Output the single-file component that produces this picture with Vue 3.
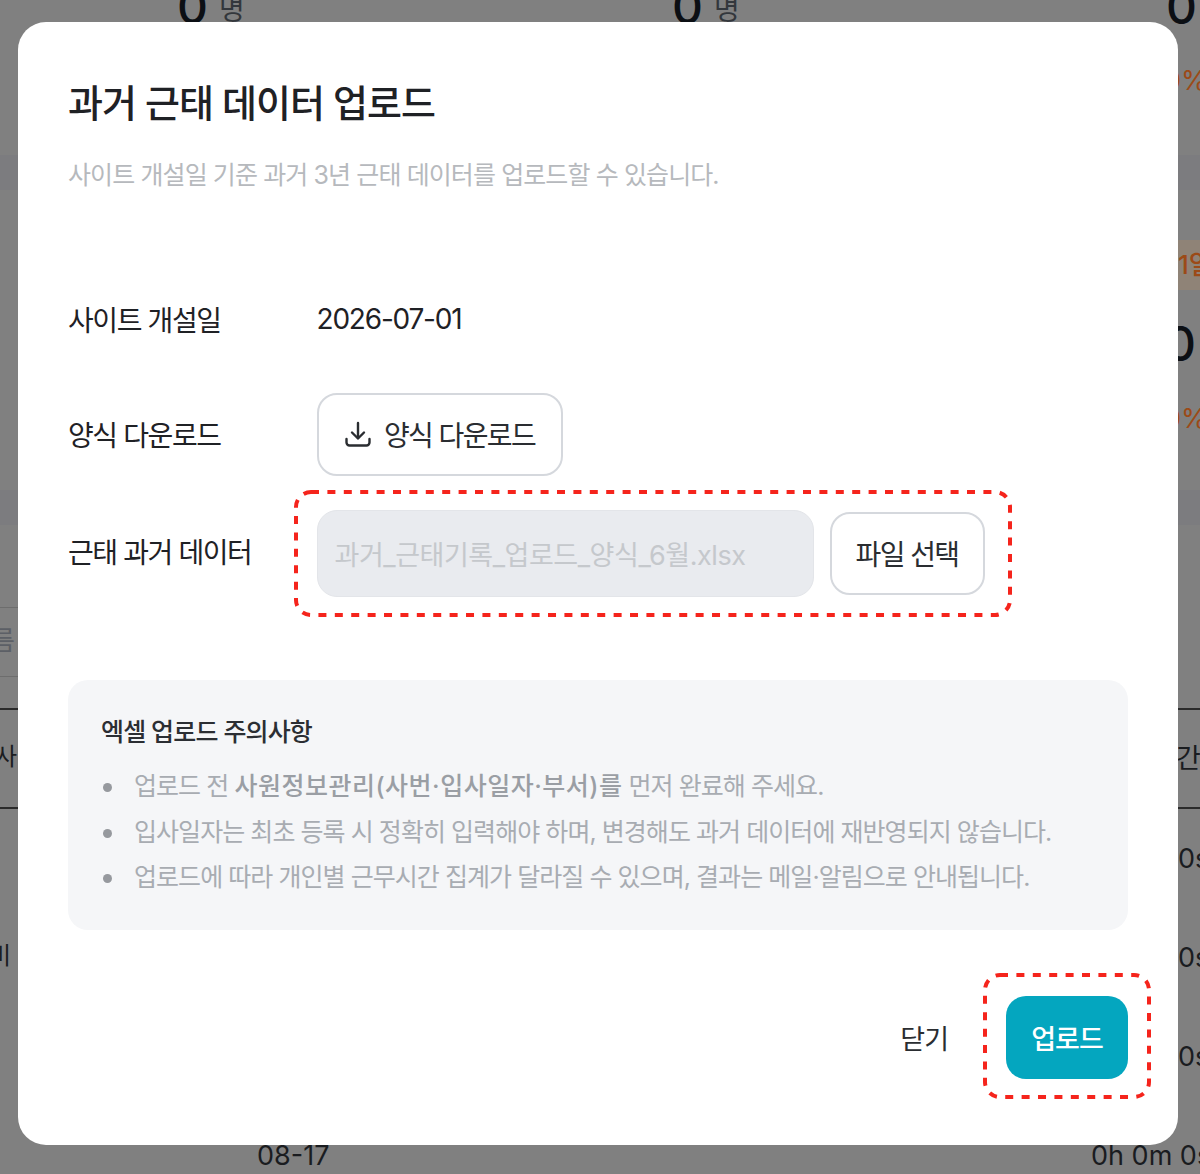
<script setup>
const rows = [
  { id: 1, lead: '업로드 전 ', strong: '사원정보관리(사번·입사일자·부서)를', tail: ' 먼저 완료해 주세요.' },
  { id: 2, lead: '입사일자는 최초 등록 시 정확히 입력해야 하며, 변경해도 과거 데이터에 재반영되지 않습니다.', strong: '', tail: '' },
  { id: 3, lead: '업로드에 따라 개인별 근무시간 집계가 달라질 수 있으며, 결과는 메일·알림으로 안내됩니다.', strong: '', tail: '' }
]
</script>

<template>
  <div class="page">
    <div class="backdrop">
      <span class="bg band s1"></span>
      <span class="bg band s2"></span>
      <span class="bg band s3"></span>
      <span class="bg band s4"></span>
      <span class="bg big b1">0</span><span class="bg unit u1">명</span>
      <span class="bg big b2">0</span><span class="bg unit u2">명</span>
      <span class="bg big b3">0</span>
      <span class="bg pct p1">0%</span>
      <span class="bg tag">1일</span>
      <span class="bg big b4">0</span>
      <span class="bg pct p2">0%</span>
      <span class="bg field"></span>
      <span class="bg field-text">름</span>
      <span class="bg rule r1"></span>
      <span class="bg rule r2"></span>
      <span class="bg cell c1">사</span>
      <span class="bg cell c2">비</span>
      <span class="bg cell c3">간</span>
      <span class="bg cell t1">0s</span>
      <span class="bg cell t2">0s</span>
      <span class="bg cell t3">0s</span>
      <span class="bg cell d1">08-17</span>
      <span class="bg cell d2">0h 0m 0s</span>
    </div>

    <section class="modal">
      <h1 class="title">과거 근태 데이터 업로드</h1>
      <p class="subtitle">사이트 개설일 기준 과거 3년 근태 데이터를 업로드할 수 있습니다.</p>

      <div class="form">
        <div class="row row-date">
          <span class="label">사이트 개설일</span>
          <span class="value">2026-07-01</span>
        </div>
        <div class="row row-download">
          <span class="label">양식 다운로드</span>
          <button class="btn download" type="button">
            <svg class="icon" viewBox="0 0 28 28" fill="none" stroke="currentColor" stroke-width="2.4" stroke-linecap="round" stroke-linejoin="round">
              <path d="M14 3v15" />
              <path d="M8 12.5l6 6 6-6" />
              <path d="M2.5 19v3.5a3 3 0 0 0 3 3h17a3 3 0 0 0 3-3V19" />
            </svg>
            <span>양식 다운로드</span>
          </button>
        </div>
        <div class="row row-file">
          <span class="label label-file">근태 과거 데이터</span>
          <div class="file-group">
            <div class="file-input">과거_근태기록_업로드_양식_6월.xlsx</div>
            <button class="btn pick" type="button">파일 선택</button>
            <svg class="mark mark-file" viewBox="0 0 718 127" fill="none">
              <rect x="2" y="2" width="714" height="123" rx="15" />
            </svg>
          </div>
        </div>
      </div>

      <div class="notice">
        <h2 class="notice-title">엑셀 업로드 주의사항</h2>
        <ul class="notice-list">
          <li v-for="r in rows" :key="r.id">{{ r.lead }}<b v-if="r.strong">{{ r.strong }}</b>{{ r.tail }}</li>
        </ul>
      </div>

      <div class="actions">
        <button class="close" type="button">닫기</button>
        <div class="upload-wrap">
          <button class="upload" type="button">업로드</button>
          <svg class="mark mark-upload" viewBox="0 0 168 126" fill="none">
            <rect x="2" y="2" width="164" height="122" rx="15" />
          </svg>
        </div>
      </div>
    </section>
  </div>
</template>

<style>
html, body { margin: 0; background: #808080; }
</style>

<style scoped>
.page {
  position: relative;
  width: 1200px;
  height: 1174px;
  overflow: hidden;
  background: #808080;
  font-family: "Inter", "Noto Sans CJK KR", sans-serif;
  color: #1f2125;
}
.backdrop { position: absolute; inset: 0; }
.bg { position: absolute; white-space: nowrap; line-height: 1; }
.band { background: #7c7c7f; }
.s1 { left: 0; top: 155px; width: 18px; height: 35px; }
.s2 { left: 0; top: 490px; width: 18px; height: 35px; }
.s3 { left: 1178px; top: 155px; width: 22px; height: 35px; }
.s4 { left: 1178px; top: 490px; width: 22px; height: 35px; }
.big { font-size: 48px; color: #0c0f14; font-weight: 500; }
.b1 { left: 177px; top: -17px; }
.b2 { left: 672px; top: -17px; }
.b3 { left: 1166px; top: -17px; }
.b4 { left: 1165px; top: 320px; }
.unit { font-size: 28px; color: #33373c; }
.u1 { left: 219px; top: -4px; }
.u2 { left: 714px; top: -4px; }
.pct { font-size: 27px; color: #9c4a17; }
.p1 { left: 1164px; top: 67px; }
.p2 { left: 1164px; top: 405px; }
.tag { left: 1178px; top: 240px; width: 22px; height: 50px; line-height: 50px; background: #8f8377; color: #9c4a17; font-size: 26px; font-weight: 500; overflow: hidden; }
.field { left: 0; top: 607px; width: 18px; height: 68px; border-top: 1px solid #6d6d6d; border-bottom: 1px solid #6d6d6d; }
.field-text { left: -9px; top: 628px; font-size: 26px; color: #5c5f66; }
.rule { left: 0; width: 1200px; height: 2px; background: #2b2b2b; }
.r1 { top: 708px; }
.r2 { top: 807px; }
.cell { font-size: 27px; color: #1a1c20; }
.c1 { left: -5px; top: 745px; font-size: 24px; }
.c2 { left: -11px; top: 944px; font-size: 24px; }
.c3 { left: 1176px; top: 745px; }
.t1 { left: 1178px; top: 845px; }
.t2 { left: 1178px; top: 944px; }
.t3 { left: 1178px; top: 1043px; }
.d1 { left: 257px; top: 1142px; }
.d2 { left: 1091px; top: 1142px; }

.modal {
  position: absolute;
  left: 18px;
  top: 22px;
  width: 1160px;
  height: 1123px;
  box-sizing: border-box;
  padding: 51px 50px 0;
  background: #fff;
  border-radius: 28px;
}
.title { margin: 0; font-size: 38px; line-height: 60px; font-weight: 500; letter-spacing: -1px; color: #1f2125; }
.subtitle { margin: 22px 0 0; font-size: 25px; line-height: 40px; font-weight: 400; letter-spacing: -0.9px; color: #b6b9bd; }

.form { margin-top: 83px; display: flex; flex-direction: column; }
.row { display: flex; align-items: center; }
.row-date { height: 82px; }
.row-download { height: 82px; margin-top: 33px; }
.row-file { height: 84px; margin-top: 36px; }
.label { width: 248.5px; flex: none; font-size: 28px; font-weight: 400; letter-spacing: -1.4px; color: #1f2125; }
.label-file { margin-bottom: 5px; }
.value { font-size: 28px; letter-spacing: -1.2px; color: #1f2125; }

.btn {
  box-sizing: border-box;
  background: #fff;
  border: 2px solid #d5d8dd;
  border-radius: 20px;
  font: inherit;
  font-size: 28px;
  letter-spacing: -1.6px;
  color: #2a2d31;
  display: inline-flex;
  align-items: center;
  justify-content: center;
}
.download { width: 246px; height: 83px; gap: 12px; }
.icon { width: 28px; height: 28px; }

.file-group { position: relative; display: flex; align-items: center; gap: 16px; }
.file-input {
  box-sizing: border-box;
  width: 497px;
  height: 87px;
  padding-left: 17px;
  display: flex;
  align-items: center;
  background: #e9ebef;
  border: 1px solid #e3e5e9;
  border-radius: 20px;
  font-size: 27px;
  letter-spacing: -0.45px;
  color: #c5c8cc;
}
.pick { width: 155px; height: 83px; }
.mark { position: absolute; pointer-events: none; overflow: visible; }
.mark rect { stroke: #f5241c; stroke-width: 4; stroke-dasharray: 8 8.4; }
.mark-file { left: -23px; top: -20px; width: 718px; height: 127px; }

.notice {
  margin-top: 85px;
  box-sizing: border-box;
  height: 250px;
  padding: 31px 33px 0;
  background: #f5f6f8;
  border-radius: 20px;
}
.notice-title { margin: 0; font-size: 25px; line-height: 42px; font-weight: 500; letter-spacing: -0.85px; color: #2b2e33; }
.notice-list { margin: 11px 0 0; padding: 0; list-style: none; color: #a8acb2; font-size: 25px; line-height: 45.5px; letter-spacing: -0.95px; }
.notice-list li { position: relative; padding-left: 33px; white-space: nowrap; }
.notice-list li::before {
  content: "";
  position: absolute;
  left: 2px;
  top: 19px;
  width: 9px;
  height: 9px;
  border-radius: 50%;
  background: #96999e;
}
.notice-list b { font-weight: 500; color: #9a9ea4; letter-spacing: 0.5px; }

.actions { margin-top: 66px; display: flex; justify-content: flex-end; align-items: center; gap: 58px; }
.close { padding: 0; background: none; border: 0; font: inherit; font-size: 27px; letter-spacing: -1px; color: #2a2d31; }
.upload-wrap { position: relative; display: flex; }
.upload {
  width: 122px;
  height: 83px;
  border: 0;
  border-radius: 20px;
  background: #04a6bf;
  color: #fff;
  font: inherit;
  font-size: 27px;
  font-weight: 500;
  letter-spacing: -1px;
}
.mark-upload { left: -23px; top: -23px; width: 168px; height: 126px; }
</style>
